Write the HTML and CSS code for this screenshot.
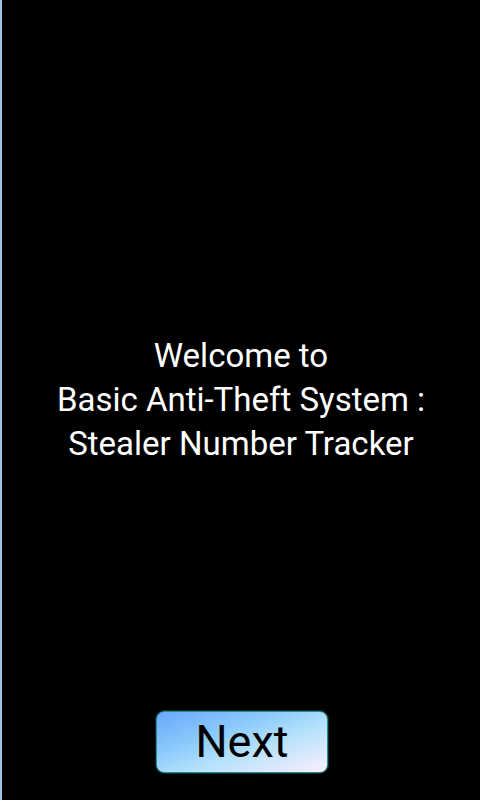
FILE: index.html
```html
<!DOCTYPE html>
<html>
<head>
<meta charset="utf-8">
<link rel="stylesheet" href="styles.css">
</head>
<body>
<div class="screen">
  <main class="content">
    <p class="welcome">Welcome to<br>Basic Anti-Theft System :<br>Stealer Number Tracker</p>
  </main>
  <footer class="footer">
    <button class="next">Next</button>
  </footer>
</div>
</body>
</html>
```
FILE: styles.css
```css
html, body {
  margin: 0;
  padding: 0;
  background: #000;
}
.screen {
  width: 480px;
  height: 800px;
  box-sizing: border-box;
  border-left: 2px solid #9fc2e4;
  display: flex;
  flex-direction: column;
  font-family: Roboto, "Noto Sans", sans-serif;
}
.content {
  flex: 1;
  padding-top: 100px;
  display: flex;
  align-items: center;
  justify-content: center;
}
.welcome {
  margin: 0;
  color: #fff;
  font-size: 33px;
  line-height: 44px;
  text-align: center;
}
.footer {
  height: 100px;
  box-sizing: border-box;
  padding: 11px 0 27px;
  display: flex;
  justify-content: center;
}
.next {
  width: 172px;
  height: 62px;
  margin-left: 2px;
  box-sizing: border-box;
  border: 1px solid #2b8a86;
  border-radius: 8px;
  box-shadow: 0 0 0 1px #0a2a30;
  background: linear-gradient(to bottom right, #68a8fa 0%, #8ccafc 35%, #b6e2fc 60%, #fbeffc 100%);
  color: #000;
  font-family: Roboto, "Noto Sans", sans-serif;
  font-size: 45px;
  line-height: 1;
  padding: 0 0 2px;
  cursor: pointer;
}
```
